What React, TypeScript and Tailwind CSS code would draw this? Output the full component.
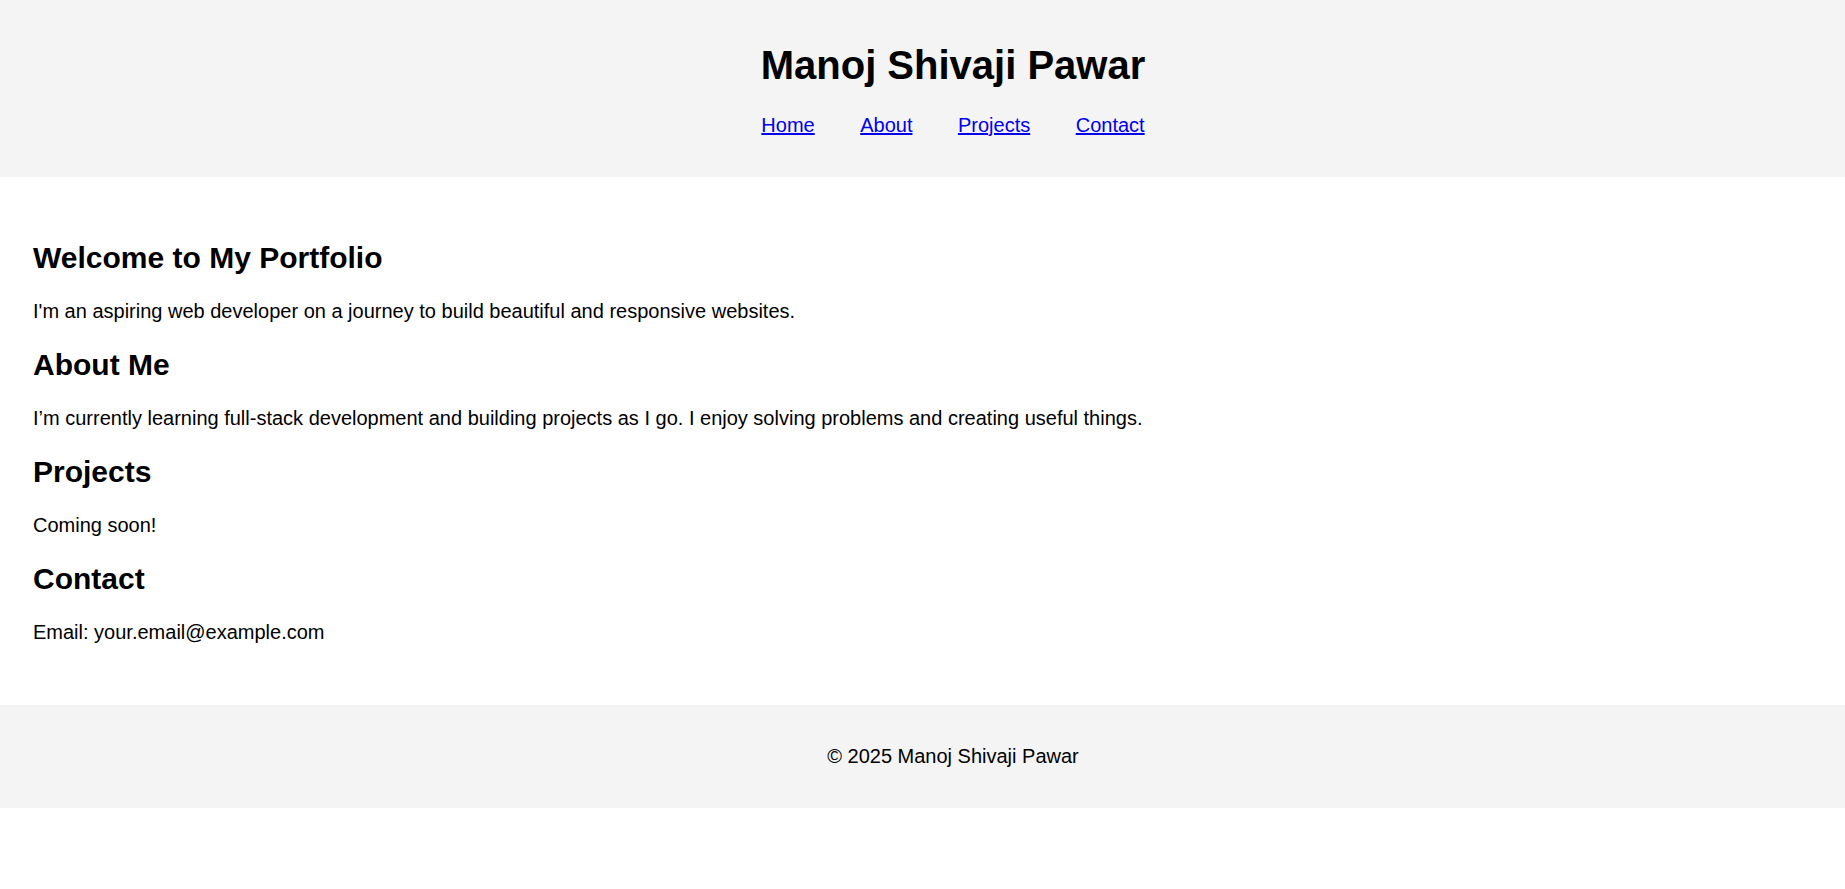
export default function App() {
  const navItems = [
    { href: "#home", label: "Home" },
    { href: "#about", label: "About" },
    { href: "#projects", label: "Projects" },
    { href: "#contact", label: "Contact" },
  ];

  return (
    <div className="min-h-screen bg-white text-black font-['Liberation_Sans',Arial,sans-serif]">
      {/* Header */}
      <header className="bg-[#f4f4f4] pt-[42px] pb-[40px] pl-[61px] text-center">
        <h1 className="text-[40px] leading-[46px] font-bold">Manoj Shivaji Pawar</h1>
        <nav className="mt-[26px] flex justify-center gap-[45.5px] text-[20px] leading-[23px]">
          {navItems.map((item) => (
            <a key={item.href} href={item.href} className="text-[#0000ee] underline">
              {item.label}
            </a>
          ))}
        </nav>
      </header>

      {/* Main content */}
      <main className="pt-[39px] pb-[41px] px-[33px] text-[20px] leading-[23px]">
        <section id="home">
          <h2 className="my-[24.8px] text-[30px] leading-[34.5px] font-bold">Welcome to My Portfolio</h2>
          <p className="my-5">I'm an aspiring web developer on a journey to build beautiful and responsive websites.</p>
        </section>
        <section id="about">
          <h2 className="my-[24.8px] text-[30px] leading-[34.5px] font-bold">About Me</h2>
          <p className="my-5">
            I’m currently learning full-stack development and building projects as I go. I enjoy solving problems and creating useful things.
          </p>
        </section>
        <section id="projects">
          <h2 className="my-[24.8px] text-[30px] leading-[34.5px] font-bold">Projects</h2>
          <p className="my-5">Coming soon!</p>
        </section>
        <section id="contact">
          <h2 className="my-[24.8px] text-[30px] leading-[34.5px] font-bold">Contact</h2>
          <p className="my-5">Email: your.email@example.com</p>
        </section>
      </main>

      {/* Footer */}
      <footer className="bg-[#f4f4f4] py-[40px] pl-[61px] text-center text-[20px] leading-[23px]">
        <p>© 2025 Manoj Shivaji Pawar</p>
      </footer>
    </div>
  );
}
